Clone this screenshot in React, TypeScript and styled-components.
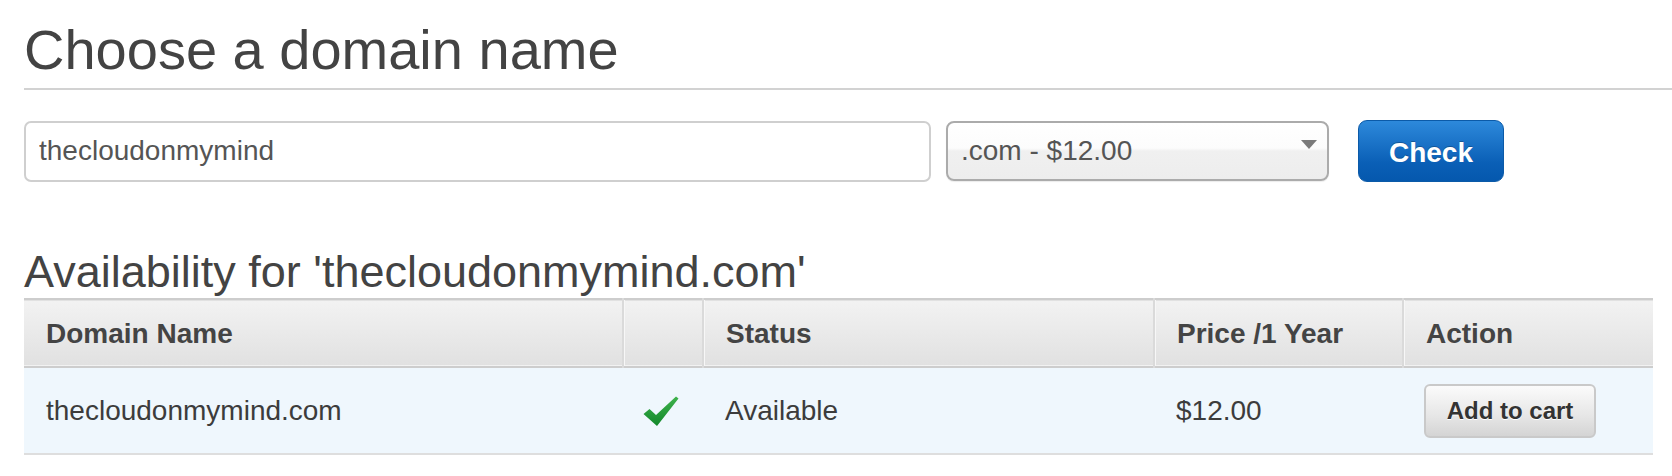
import React from "react";
import styled, { createGlobalStyle } from "styled-components";

const Global = createGlobalStyle`
  html, body { margin: 0; padding: 0; background: #fff; }
  body { font-family: "Liberation Sans", Arial, Helvetica, sans-serif; color: #444; }
  * { box-sizing: border-box; }
`;

const Page = styled.div`
  padding: 22px 0 0 24px;
  width: 1672px;
`;

const Title = styled.h1`
  margin: 0;
  font-size: 56px;
  line-height: 56px;
  font-weight: normal;
  color: #434343;
  padding-bottom: 10px;
  border-bottom: 2px solid #d2d2d2;
`;

const FormRow = styled.div`
  display: flex;
  align-items: center;
  margin-top: 30px;
  height: 62px;
`;

const TextInput = styled.input`
  width: 907px;
  height: 61px;
  border: 2px solid #cfcfcf;
  border-radius: 7px;
  padding: 0 13px;
  font-family: "Liberation Sans", Arial, sans-serif;
  font-size: 28px;
  color: #555;
  outline: none;
  background: #fff;
`;

const SelectBox = styled.div`
  margin-left: 15px;
  width: 383px;
  height: 60px;
  border: 2px solid #ababab;
  border-radius: 8px;
  display: flex;
  align-items: center;
  justify-content: space-between;
  padding: 0 10px 0 13px;
  font-size: 28px;
  color: #555;
  background: linear-gradient(#ffffff 0%, #fcfcfc 45%, #f0f0f0 50%, #ededed 100%);
  box-shadow: 0 1px 1px rgba(0, 0, 0, 0.08);
`;

const Caret = styled.span`
  width: 0;
  height: 0;
  border-left: 8px solid transparent;
  border-right: 8px solid transparent;
  border-top: 9px solid #7a7a7a;
  margin-top: -14px;
`;

const PrimaryButton = styled.button`
  margin-left: 29px;
  width: 146px;
  height: 62px;
  border: 1px solid #0b5aa8;
  border-radius: 9px;
  background: linear-gradient(#2d89db, #0a5fb6 70%, #0558ad);
  color: #fff;
  font-family: "Liberation Sans", Arial, sans-serif;
  font-weight: bold;
  font-size: 28px;
  text-shadow: 0 -1px 0 rgba(0, 0, 0, 0.25);
  padding: 3px 0 0 0;
  cursor: pointer;
`;

const SubTitle = styled.h2`
  margin: 67px 0 0 0;
  font-size: 45px;
  line-height: 45px;
  font-weight: normal;
  color: #434343;
`;

const Table = styled.table`
  margin-top: 4px;
  width: 1629px;
  border-collapse: collapse;
  table-layout: fixed;
  font-size: 28px;
`;

const HeadRow = styled.tr`
  height: 68px;
  background: linear-gradient(#f2f2f2, #e1e1e1);
  border-top: 2px solid #cdcdcd;
  border-bottom: 2px solid #cdcdcd;
`;

const Th = styled.th<{ $divider?: boolean }>`
  text-align: left;
  font-weight: bold;
  color: #444;
  padding: 2px 0 0 22px;
  border-left: ${(p) => (p.$divider ? "2px solid #dadada" : "none")};
  box-shadow: ${(p) => (p.$divider ? "inset 1px 0 0 #f7f7f7" : "none")};
`;

const BodyRow = styled.tr`
  height: 87px;
  background: #eff7fd;
  border-bottom: 2px solid #dedede;
`;

const Td = styled.td<{ $center?: boolean }>`
  padding: 0 0 0 ${(p) => (p.$center ? "0" : "22px")};
  text-align: ${(p) => (p.$center ? "center" : "left")};
  color: #3c3c3c;
  vertical-align: middle;
`;

const CheckIcon = styled.svg`
  display: block;
  margin: 2px 0 0 20px;
`;

const CartButton = styled.button`
  width: 172px;
  height: 54px;
  border: 2px solid #c9c9c9;
  border-radius: 6px;
  background: linear-gradient(#fbfbfb, #e6e6e6 60%, #d4d4d4);
  font-family: "Liberation Sans", Arial, sans-serif;
  font-weight: bold;
  font-size: 24px;
  color: #333;
  text-shadow: 0 1px 0 #fff;
  padding: 0;
  margin-left: -1px;
  cursor: pointer;
`;

const columns = [
  { key: "name", label: "Domain Name", width: 599 },
  { key: "icon", label: "", width: 80 },
  { key: "status", label: "Status", width: 451 },
  { key: "price", label: "Price /1 Year", width: 249 },
  { key: "action", label: "Action", width: 250 },
];

const Check = () => (
  <CheckIcon width="36" height="31" viewBox="0 0 36 31">
    <defs>
      <linearGradient id="chk" x1="0" y1="0" x2="0" y2="1">
        <stop offset="0" stopColor="#3fb24c" />
        <stop offset="1" stopColor="#12882b" />
      </linearGradient>
    </defs>
    <path d="M0.5 18 L6.5 13 L13 19 L33 0.5 L35.5 2.5 L14 30 Z" fill="url(#chk)" />
  </CheckIcon>
);

export default function App() {
  return (
    <>
      <Global />
      <Page>
        <Title>Choose a domain name</Title>
        <FormRow>
          <TextInput defaultValue="thecloudonmymind" />
          <SelectBox role="combobox">
            <span>.com - $12.00</span>
            <Caret />
          </SelectBox>
          <PrimaryButton>Check</PrimaryButton>
        </FormRow>
        <SubTitle>Availability for 'thecloudonmymind.com'</SubTitle>
        <Table>
          <colgroup>
            {columns.map((c) => (
              <col key={c.key} style={{ width: c.width }} />
            ))}
          </colgroup>
          <thead>
            <HeadRow>
              {columns.map((c, i) => (
                <Th key={c.key} $divider={i > 0}>
                  {c.label}
                </Th>
              ))}
            </HeadRow>
          </thead>
          <tbody>
            <BodyRow>
              <Td>thecloudonmymind.com</Td>
              <Td $center>
                <Check />
              </Td>
              <Td>Available</Td>
              <Td>$12.00</Td>
              <Td>
                <CartButton>Add to cart</CartButton>
              </Td>
            </BodyRow>
          </tbody>
        </Table>
      </Page>
    </>
  );
}
